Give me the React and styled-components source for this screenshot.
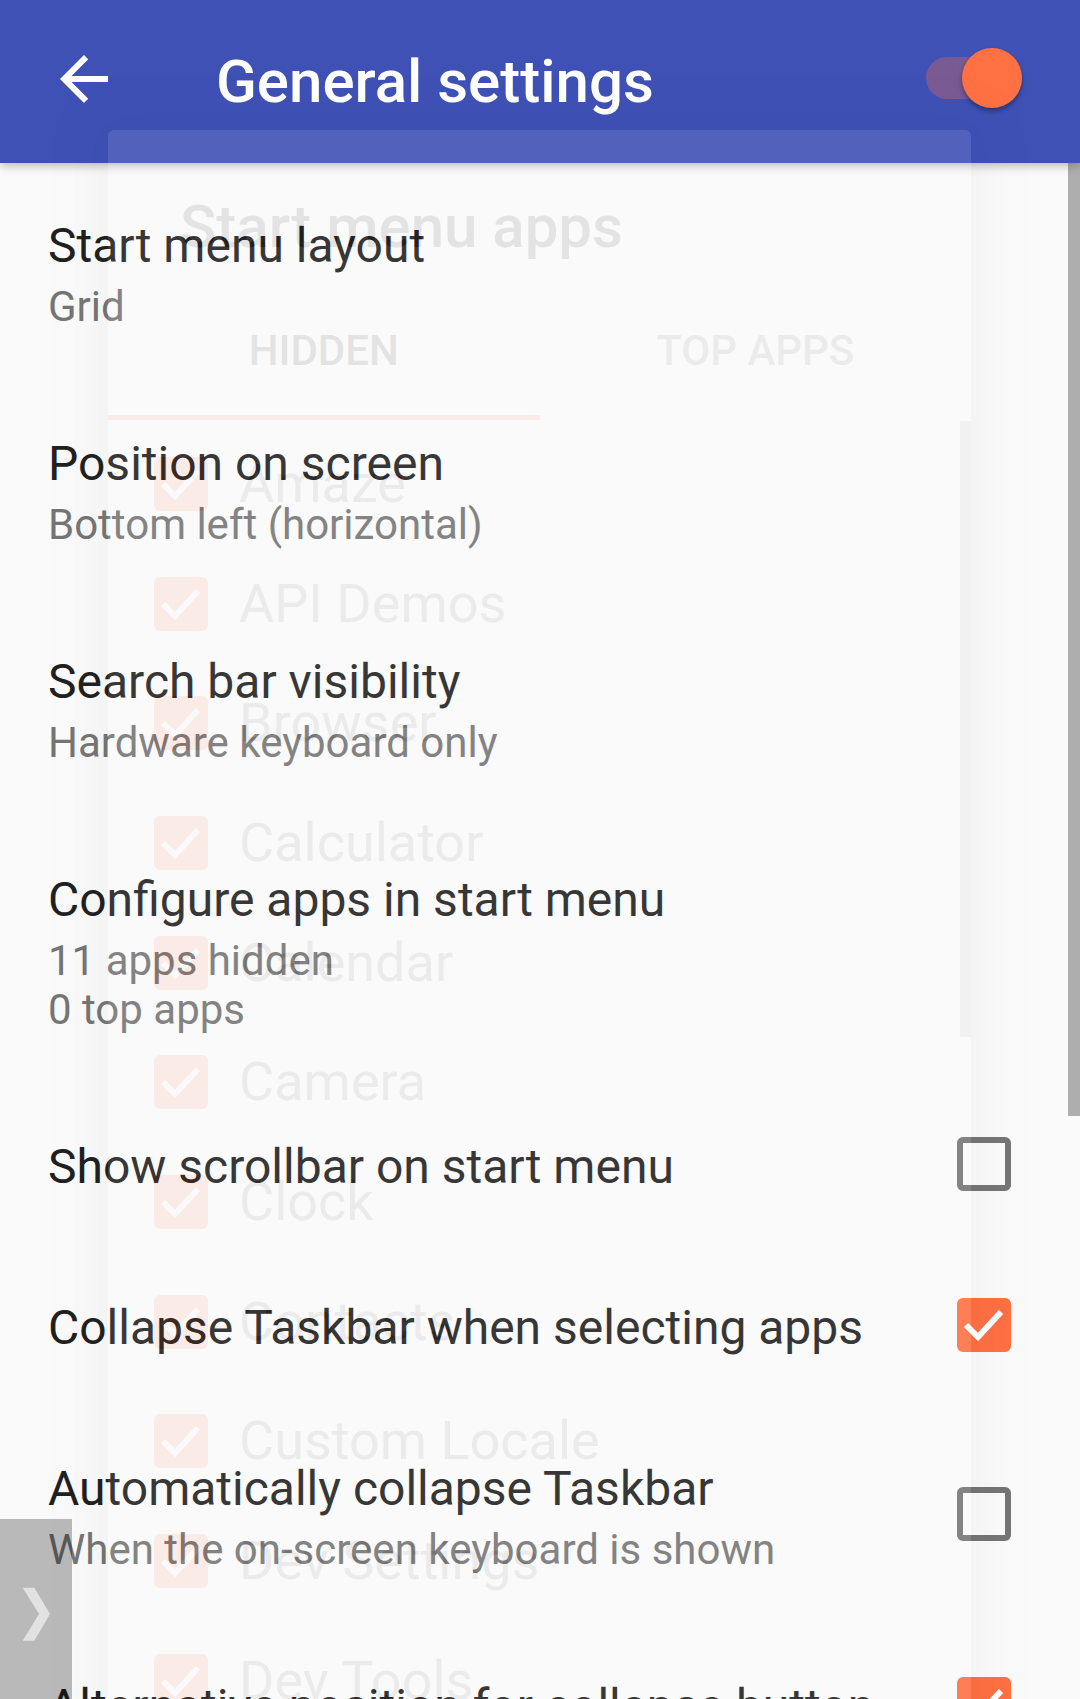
import React from "react"
import styled, { createGlobalStyle } from "styled-components"

const ACCENT = "#ff7043";

const GlobalStyle = createGlobalStyle`
html, body {
  margin: 0;
  padding: 0;
  background: #fafafa;
}
body {
  font-family: Roboto, "Noto Sans", "Liberation Sans", sans-serif;
}
`;

const Screen = styled.div`
position: relative;
width: 1080px;
height: 1699px;
overflow: hidden;
background: #fafafa;
`;

const Toolbar = styled.header`
position: relative;
z-index: 2;
display: flex;
align-items: center;
height: 163px;
background: #3f51b5;
box-shadow: 0 2px 10px rgba(0, 0, 0, 0.3);
color: #fff;
`;

const NavButton = styled.div`
display: flex;
width: 72px;
height: 72px;
margin: 0 0 5px 48px;
`;

const ToolbarTitle = styled.h1`
margin: 0 0 0 96px;
font-size: 60px;
font-weight: 500;
line-height: 60px;
`;

const MasterSwitch = styled.div`
position: relative;
width: 96px;
height: 60px;
margin: 0 58px 7px auto;
`;

const SwitchTrack = styled.div`
position: absolute;
left: 0;
top: 9px;
width: 90px;
height: 42px;
border-radius: 21px;
background: rgba(255, 112, 67, 0.3);
`;

const SwitchThumb = styled.div`
position: absolute;
right: 0;
top: 0;
width: 60px;
height: 60px;
border-radius: 50%;
background: ${ACCENT};
box-shadow: 0 3px 5px rgba(0, 0, 0, 0.35);
`;

const PrefList = styled.div`
padding-top: 2px;
`;

const Pref = styled.div`
display: flex;
align-items: center;
padding: 52.5px 69px 52.5px 48px;
`;

const PrefText = styled.div`
flex: 1;
`;

const PrefTitle = styled.div`
font-size: 48px;
line-height: 56px;
color: #212121;
`;

const PrefSummary = styled.div`
margin-top: 8px;
font-size: 42px;
line-height: 49px;
color: #757575;
white-space: pre-line;
`;

const Box = styled.div`
display: flex;
flex-shrink: 0;
box-sizing: border-box;
width: ${p => p.$size}px;
height: ${p => p.$size}px;
border: 6px solid ${p => (p.$checked ? ACCENT : "#757575")};
border-radius: 6px;
background: ${p => (p.$checked ? ACCENT : "transparent")};
`;

const PrefBox = styled.div`
display: flex;
margin-top: -6px;
`;

const ScrollThumb = styled.div`
position: absolute;
top: 163px;
right: 0;
width: 12px;
height: 953px;
background: rgba(0, 0, 0, 0.3);
`;

const Handle = styled.div`
position: absolute;
left: 0;
top: 1519px;
bottom: 0;
z-index: 5;
width: 72px;
background: rgba(0, 0, 0, 0.26);
`;

// the "Start menu apps" dialog, caught while fading out
const Dialog = styled.div`
position: absolute;
z-index: 4;
top: 130px;
left: 108px;
width: 863px;
bottom: -60px;
opacity: 0.1;
background: #fafafa;
border-radius: 6px 6px 0 0;
box-shadow: 0 0 44px 10px rgba(0, 0, 0, 0.3);
`;

const DialogTitle = styled.div`
padding: 62px 72px 0;
font-size: 60px;
font-weight: 500;
line-height: 70px;
color: #212121;
`;

const TabBar = styled.div`
display: flex;
margin-top: 24.6px;
`;

const Tab = styled.div`
display: flex;
flex: 1;
align-items: center;
justify-content: center;
height: 128px;
border-bottom: 5px solid ${p => (p.$active ? ACCENT : "transparent")};
font-size: 42px;
font-weight: 500;
line-height: 42px;
color: ${p => (p.$active ? "#212121" : "#757575")};
`;

const AppList = styled.div`
position: relative;
padding-top: 4.5px;
`;

const AppRow = styled.div`
display: flex;
align-items: center;
height: 119.7px;
padding-left: 46px;
`;

const AppLabel = styled.span`
margin-left: 31px;
font-size: 54px;
line-height: 64px;
color: #707070;
`;

const ListScroll = styled.div`
position: absolute;
top: 1.5px;
right: 0;
width: 11px;
height: 616px;
background: rgba(0, 0, 0, 0.3);
`;

function CheckBox({ checked, size = 54 }) {
    return (
        <Box $checked={checked} $size={size}>
            {checked && (
                <svg width={size - 12} height={size - 12} viewBox="0 0 42 42">
                    <polyline points="3,21 15,33 38,8" fill="none" stroke="#fff" strokeWidth="6" />
                </svg>
            )}
        </Box>
    )
}

const prefs = [
    { title: "Start menu layout", summary: "Grid" },
    { title: "Position on screen", summary: "Bottom left (horizontal)" },
    { title: "Search bar visibility", summary: "Hardware keyboard only" },
    { title: "Configure apps in start menu", summary: "11 apps hidden\n0 top apps" },
    { title: "Show scrollbar on start menu", box: "off" },
    { title: "Collapse Taskbar when selecting apps", box: "on" },
    { title: "Automatically collapse Taskbar", summary: "When the on-screen keyboard is shown", box: "off" },
    { title: "Alternative position for collapse button", box: "on" },
];

const apps = ["Amaze", "API Demos", "Browser", "Calculator", "Calendar", "Camera", "Clock", "Contacts", "Custom Locale", "Dev Settings", "Dev Tools", "Email"];

function App() {
    return (
        <Screen>
            <GlobalStyle />
            <Toolbar>
                <NavButton>
                    <svg width="72" height="72" viewBox="0 0 24 24">
                        <path fill="#fff" d="M20 11H7.83l5.59-5.59L12 4l-8 8 8 8 1.41-1.41L7.83 13H20v-2z" />
                    </svg>
                </NavButton>
                <ToolbarTitle>General settings</ToolbarTitle>
                <MasterSwitch>
                    <SwitchTrack />
                    <SwitchThumb />
                </MasterSwitch>
            </Toolbar>

            <PrefList>
                {prefs.map(p => (
                    <Pref key={p.title}>
                        <PrefText>
                            <PrefTitle>{p.title}</PrefTitle>
                            {p.summary && <PrefSummary>{p.summary}</PrefSummary>}
                        </PrefText>
                        {p.box && (
                            <PrefBox>
                                <CheckBox checked={p.box === "on"} />
                            </PrefBox>
                        )}
                    </Pref>
                ))}
            </PrefList>

            <ScrollThumb />

            <Dialog>
                <DialogTitle>Start menu apps</DialogTitle>
                <TabBar>
                    <Tab $active>HIDDEN</Tab>
                    <Tab>TOP APPS</Tab>
                </TabBar>
                <AppList>
                    {apps.map(name => (
                        <AppRow key={name}>
                            <CheckBox checked />
                            <AppLabel>{name}</AppLabel>
                        </AppRow>
                    ))}
                    <ListScroll />
                </AppList>
            </Dialog>

            <Handle>
                <svg width="72" height="180" viewBox="0 0 72 180">
                    <polygon points="22.7,68.7 34.3,68.7 50,95 34.3,121.7 22.7,121.7 39,95" fill="#e2e2e2" />
                </svg>
            </Handle>
        </Screen>
    )
}

export default App;
